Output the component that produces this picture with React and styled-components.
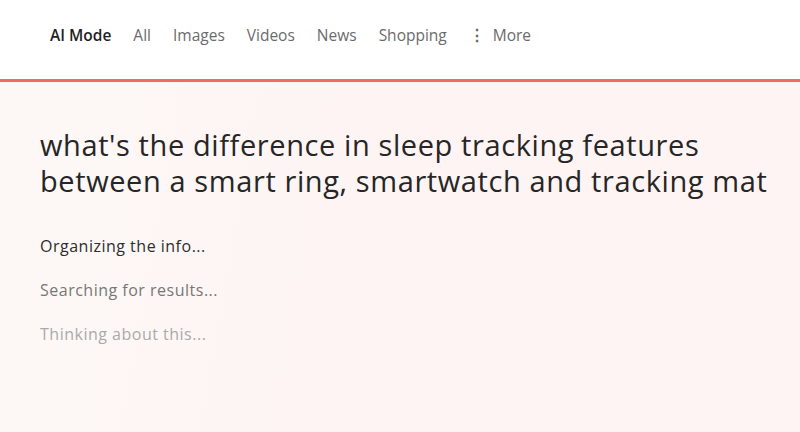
import styled, { createGlobalStyle } from "styled-components";

const GlobalStyle = createGlobalStyle`
  html, body {
    margin: 0;
    padding: 0;
  }
  body {
    font-family: "Open Sans", Roboto, "Liberation Sans", sans-serif;
    background: #fff;
  }
`;

const Page = styled.div`
  width: 800px;
  height: 432px;
  display: flex;
  flex-direction: column;
  overflow: hidden;
`;

const NavBar = styled.nav`
  height: 82px;
  display: flex;
  align-items: flex-start;
  gap: 22px;
  padding: 24px 0 0 50px;
  box-sizing: border-box;
  background: #fff;
  border-bottom: 3px solid #ef6b6b;
`;

const Tab = styled.span`
  font-size: 15.5px;
  color: ${(p) => (p.$active ? "#1f1f1f" : "#6b6b6b")};
  font-weight: ${(p) => (p.$active ? 600 : 400)};
  display: flex;
  align-items: center;
  gap: 8px;
`;

const Dots = styled.span`
  font-size: 16px;
  font-weight: 700;
  color: #6b6b6b;
`;

const Body = styled.main`
  flex: 1;
  padding: 45px 0 0 40px;
  background: linear-gradient(100deg, #fdf8f6 0%, #fdf4f3 50%, #fef4f3 100%);
`;

const Question = styled.h1`
  margin: 0;
  font-size: 29px;
  letter-spacing: 0.6px;
  line-height: 36px;
  font-weight: 400;
  color: #262626;
`;

const Line = styled.span`
  display: block;
  white-space: nowrap;
`;

const Steps = styled.div`
  display: flex;
  flex-direction: column;
  gap: 22px;
  margin-top: 36px;
`;

const Step = styled.div`
  font-size: 16px;
  letter-spacing: 0.5px;
  line-height: 22px;
  color: ${(p) => p.$color};
`;

const tabs = ["All", "Images", "Videos", "News", "Shopping"];

export default function App() {
  return (
    <Page>
      <GlobalStyle />
      <NavBar>
        <Tab $active>AI Mode</Tab>
        {tabs.map((t) => (
          <Tab key={t}>{t}</Tab>
        ))}
        <Tab>
          <Dots>⋮</Dots>More
        </Tab>
      </NavBar>
      <Body>
        <Question>
          <Line>what's the difference in sleep tracking features</Line>
          <Line>between a smart ring, smartwatch and tracking mat</Line>
        </Question>
        <Steps>
          <Step $color="#2e2e2e">Organizing the info...</Step>
          <Step $color="#777">Searching for results...</Step>
          <Step $color="#aaa">Thinking about this...</Step>
        </Steps>
      </Body>
    </Page>
  );
}
